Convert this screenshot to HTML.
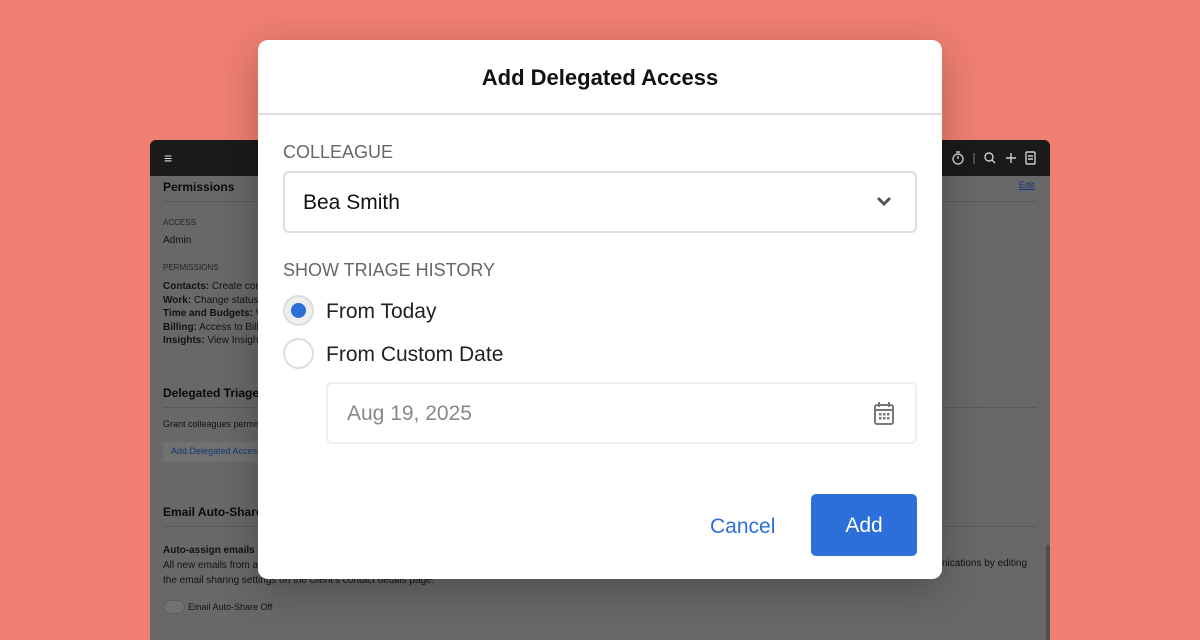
<!DOCTYPE html>
<html><head><meta charset="utf-8"><style>
*{margin:0;padding:0;box-sizing:border-box}
body{width:1200px;height:630px;background:#ef7f71;position:relative;overflow:hidden;font-family:"Liberation Sans",sans-serif}
.app{position:absolute;left:150px;top:140px;width:900px;height:500px;background-color:rgb(150,150,150);border-radius:6px 6px 0 0;overflow:hidden}
.shade{position:absolute;left:150px;top:176px;width:900px;height:464px;background:rgba(0,0,0,0.3)}
.bar{position:absolute;left:0;top:0;width:900px;height:36px;background:#1a1a1a}
.a{position:absolute;color:#111;white-space:nowrap}
.s{font-size:10px;color:#1a1a1a}
.hr{position:absolute;left:13px;width:874px;height:1px;background:#808080}
.modal{position:absolute;left:258px;top:40px;width:684px;height:539px;background:#fff;border-radius:10px;box-shadow:0 10px 40px rgba(0,0,0,.25)}
.m{position:absolute;white-space:nowrap}
</style></head><body>
<div class="app">
<div class="bar">
<div class="a" style="left:14px;top:10px;color:#ddd;font-size:14px">≡</div>
<svg style="position:absolute;left:800px;top:10px" width="90" height="16" viewBox="0 0 90 16" fill="none" stroke="#ccc" stroke-width="1.4"><circle cx="8" cy="9" r="5"/><path d="M8 9V6M6 2h4"/><path d="M24 3v11" stroke="#666"/><circle cx="39" cy="7" r="4"/><path d="M42 10l3 3"/><path d="M61 3v10M56 8h10"/><rect x="76" y="2" width="9" height="12" rx="1"/><path d="M78 6h5M78 9h5"/></svg>
</div>
<div class="a" style="left:13px;top:40px;font-size:12px;font-weight:bold">Permissions</div>
<div class="a" style="left:869px;top:40px;font-size:9px;color:#1f4fa8;text-decoration:underline">Edit</div>
<div class="hr" style="top:61px"></div>
<div class="a" style="left:13px;top:78px;font-size:8px;color:#333">ACCESS</div>
<div class="a s" style="left:13px;top:95px">Admin</div>
<div class="a" style="left:13px;top:123px;font-size:8px;color:#333">PERMISSIONS</div>
<div class="a s" style="left:13px;top:140px;line-height:13.5px"><b>Contacts:</b> Create cont<br><b>Work:</b> Change status,<br><b>Time and Budgets:</b> V<br><b>Billing:</b> Access to Billi<br><b>Insights:</b> View Insight</div>
<div class="a" style="left:13px;top:246px;font-size:12px;font-weight:bold">Delegated Triage</div>
<div class="hr" style="top:267px"></div>
<div class="a" style="left:13px;top:279px;font-size:9px;color:#1a1a1a">Grant colleagues permis</div>
<div style="position:absolute;left:13px;top:302px;width:110px;height:20px;background:#a3a3a3;border-radius:3px"></div>
<div class="a" style="left:21px;top:306px;font-size:9px;color:#1f4fa8">Add Delegated Access</div>
<div class="a" style="left:13px;top:365px;font-size:12px;font-weight:bold">Email Auto-Share</div>
<div class="hr" style="top:386px"></div>
<div class="a s" style="left:13px;top:403px;line-height:15px"><b>Auto-assign emails t</b><br>All new emails from a<br>the email sharing settings on the client's contact details page.</div>
<div class="a s" style="left:792px;top:418px">nications by editing</div>
<div style="position:absolute;left:13px;top:460px;width:22px;height:14px;border-radius:7px;background:#a3a3a3;border:1px solid #858585"></div>
<div class="a" style="left:38px;top:462px;font-size:9px;color:#1a1a1a">Email Auto-Share Off</div>
<div style="position:absolute;left:896px;top:405px;width:4px;height:95px;background:#707070"></div>
</div>
<div class="shade"></div>
<div class="modal">
<div class="m" style="left:0;width:684px;text-align:center;top:25px;font-size:22px;font-weight:bold;color:#111">Add Delegated Access</div>
<div style="position:absolute;left:0;top:73px;width:684px;height:2px;background:#ddd"></div>
<div class="m" style="left:25px;top:102px;font-size:18px;color:#666">COLLEAGUE</div>
<div style="position:absolute;left:25px;top:131px;width:634px;height:62px;border:2px solid #ddd;border-radius:6px"></div>
<div class="m" style="left:45px;top:151px;font-size:21px;color:#111">Bea Smith</div>
<svg style="position:absolute;left:617px;top:155px" width="18" height="12" viewBox="0 0 18 12"><path d="M3 3l6 6 6-6" fill="none" stroke="#555" stroke-width="3"/></svg>
<div class="m" style="left:25px;top:220px;font-size:18px;color:#666">SHOW TRIAGE HISTORY</div>
<div style="position:absolute;left:25px;top:255px;width:31px;height:31px;border-radius:50%;background:#eee;border:2px solid #ddd"></div>
<div style="position:absolute;left:33px;top:263px;width:15px;height:15px;border-radius:50%;background:#2c6fd9"></div>
<div class="m" style="left:68px;top:260px;font-size:21px;color:#222">From Today</div>
<div style="position:absolute;left:25px;top:298px;width:31px;height:31px;border-radius:50%;border:2px solid #ddd"></div>
<div class="m" style="left:68px;top:303px;font-size:21px;color:#222">From Custom Date</div>
<div style="position:absolute;left:68px;top:342px;width:591px;height:62px;border:2px solid #eee;border-radius:6px"></div>
<div class="m" style="left:89px;top:362px;font-size:21px;color:#888">Aug 19, 2025</div>
<svg style="position:absolute;left:614px;top:360px" width="24" height="26" viewBox="0 0 24 26" fill="none" stroke="#777" stroke-width="2"><rect x="3" y="5" width="18" height="19" rx="2"/><path d="M7 2v5M17 2v5M3 10h18"/><g fill="#777" stroke="none"><rect x="7" y="13" width="2.5" height="2.5"/><rect x="11" y="13" width="2.5" height="2.5"/><rect x="15" y="13" width="2.5" height="2.5"/><rect x="7" y="17" width="2.5" height="2.5"/><rect x="11" y="17" width="2.5" height="2.5"/><rect x="15" y="17" width="2.5" height="2.5"/></g></svg>
<div class="m" style="left:452px;top:475px;font-size:21px;color:#2c6fd9">Cancel</div>
<div style="position:absolute;left:553px;top:454px;width:106px;height:62px;background:#2c6fd9;border-radius:5px;color:#fff;font-size:21px;text-align:center;line-height:64px">Add</div>
</div>
</body></html>
